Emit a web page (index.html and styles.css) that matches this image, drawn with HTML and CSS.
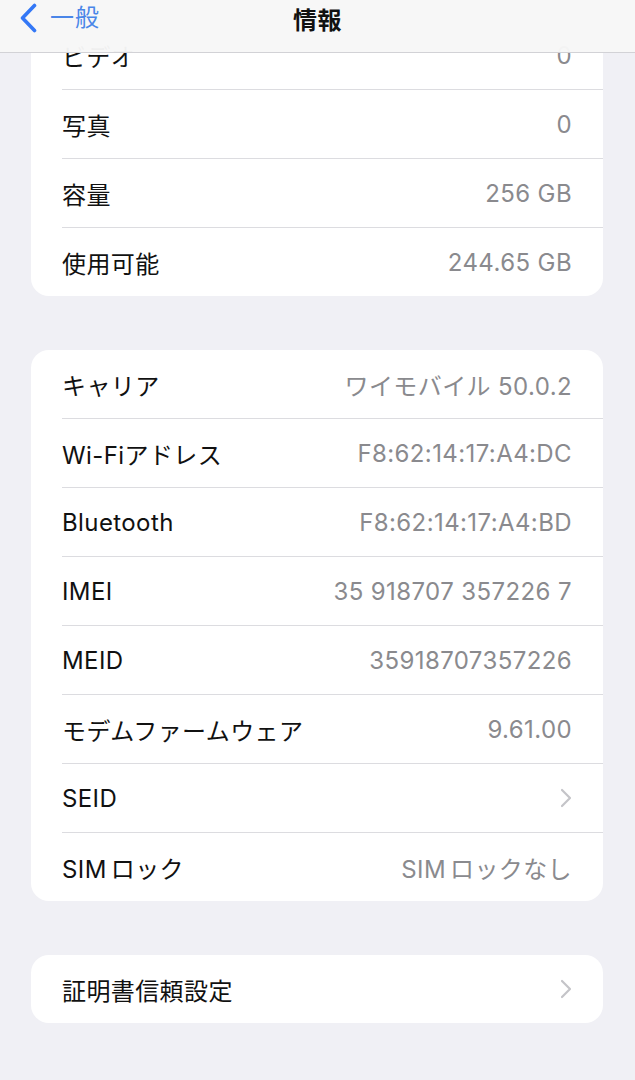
FILE: index.html
```html
<!DOCTYPE html>
<html lang="ja">
<head>
<meta charset="utf-8">
<title>情報</title>
<link rel="stylesheet" href="styles.css">
</head>
<body>
<header class="nav">
  <div class="back">
    <svg class="back-icon" width="20" height="30" viewBox="0 0 20 30"><path d="M15.5 2.5 L3.5 15 L15.5 27.5" fill="none" stroke="#3478f6" stroke-width="3.6" stroke-linecap="round" stroke-linejoin="round"/></svg>
    <span class="back-label">一般</span>
  </div>
  <div class="title">情報</div>
</header>
<main class="content">
  <section class="card first">
    <div class="row"><span class="label">ビデオ</span><span class="value">0</span></div>
    <div class="row"><span class="label">写真</span><span class="value">0</span></div>
    <div class="row"><span class="label">容量</span><span class="value">256 GB</span></div>
    <div class="row"><span class="label">使用可能</span><span class="value">244.65 GB</span></div>
  </section>
  <section class="card">
    <div class="row"><span class="label">キャリア</span><span class="value">ワイモバイル 50.0.2</span></div>
    <div class="row"><span class="label">Wi-Fiアドレス</span><span class="value">F8:62:14:17:A4:DC</span></div>
    <div class="row"><span class="label">Bluetooth</span><span class="value">F8:62:14:17:A4:BD</span></div>
    <div class="row"><span class="label">IMEI</span><span class="value">35 918707 357226 7</span></div>
    <div class="row"><span class="label">MEID</span><span class="value">35918707357226</span></div>
    <div class="row"><span class="label">モデムファームウェア</span><span class="value">9.61.00</span></div>
    <div class="row"><span class="label">SEID</span><svg class="chev" width="12" height="20" viewBox="0 0 12 20"><path d="M2 2 L10 10 L2 18" fill="none" stroke="#c4c4c8" stroke-width="2.2" stroke-linecap="round" stroke-linejoin="round"/></svg></div>
    <div class="row"><span class="label">SIM<span class="gap"></span>ロック</span><span class="value">SIM<span class="gap"></span>ロックなし</span></div>
  </section>
  <section class="card">
    <div class="row"><span class="label">証明書信頼設定</span><svg class="chev" width="12" height="20" viewBox="0 0 12 20"><path d="M2 2 L10 10 L2 18" fill="none" stroke="#c4c4c8" stroke-width="2.2" stroke-linecap="round" stroke-linejoin="round"/></svg></div>
  </section>
</main>
</body>
</html>
```
FILE: styles.css
```css
html, body {
  margin: 0;
  padding: 0;
}
body {
  background: #f0f0f5;
  font-family: Inter, "Noto Sans CJK JP", sans-serif;
  width: 635px;
  height: 1080px;
  overflow: hidden;
  position: relative;
}
.nav {
  position: absolute;
  top: 0;
  left: 0;
  right: 0;
  height: 52px;
  background: rgba(247, 247, 247, 0.97);
  border-bottom: 1px solid #d2d2d6;
  z-index: 2;
  display: flex;
  align-items: center;
  justify-content: center;
}
.back {
  position: absolute;
  left: 19px;
  top: 3px;
  display: flex;
  align-items: center;
  gap: 11px;
}
.back-label {
  font-size: 24px;
  line-height: 30px;
  color: #4a86e8;
  letter-spacing: 1px;
}
.title {
  font-size: 24px;
  font-weight: 700;
  color: #111;
  margin-top: -15px;
  letter-spacing: 0.5px;
}
.content {
  padding: 21px 32px 0 31px;
  display: flex;
  flex-direction: column;
  gap: 54px;
}
.card {
  background: #fff;
  border-radius: 18px;
  overflow: hidden;
  padding-left: 31px;
}
.row {
  height: 69px;
  box-sizing: border-box;
  display: flex;
  align-items: center;
  justify-content: space-between;
  padding-right: 31px;
  border-bottom: 1px solid #dcdce0;
}
.row:last-child {
  border-bottom: none;
  height: 68px;
}
.label {
  font-size: 24px;
  letter-spacing: 0.4px;
  color: #111;
}
.value {
  font-size: 24px;
  letter-spacing: 0.4px;
  color: #8a8a8e;
}
.gap {
  display: inline-block;
  width: 4px;
}
.chev {
  display: block;
}
```
